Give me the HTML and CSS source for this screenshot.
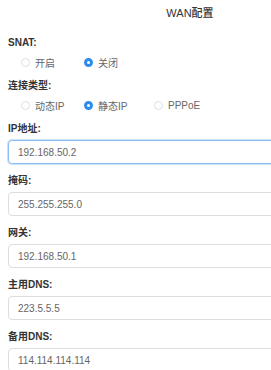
FILE: index.html
```html
<!DOCTYPE html>
<html lang="zh-CN">
<head>
  <meta charset="UTF-8">
  <meta name="viewport" content="width=device-width, initial-scale=1.0">
  <title>WAN配置</title>
  <link rel="stylesheet" href="styles.css">
</head>
<body>
  <div class="page">
    <h1 class="title">WAN配置</h1>

    <form class="wan-form">
      <div class="field field-radio">
        <label class="field-label">SNAT:</label>
        <div class="radio-group">
          <label class="radio-option"><input type="radio" name="snat" value="on"><span>开启</span></label>
          <label class="radio-option"><input type="radio" name="snat" value="off" checked><span>关闭</span></label>
        </div>
      </div>

      <div class="field field-radio">
        <label class="field-label">连接类型:</label>
        <div class="radio-group">
          <label class="radio-option"><input type="radio" name="mode" value="dhcp"><span>动态IP</span></label>
          <label class="radio-option"><input type="radio" name="mode" value="static" checked><span>静态IP</span></label>
          <label class="radio-option"><input type="radio" name="mode" value="pppoe"><span>PPPoE</span></label>
        </div>
      </div>

      <div class="field">
        <label class="field-label" for="ip">IP地址:</label>
        <input class="text-input is-focus" id="ip" type="text" value="192.168.50.2">
      </div>

      <div class="field">
        <label class="field-label" for="mask">掩码:</label>
        <input class="text-input" id="mask" type="text" value="255.255.255.0">
      </div>

      <div class="field">
        <label class="field-label" for="gateway">网关:</label>
        <input class="text-input" id="gateway" type="text" value="192.168.50.1">
      </div>

      <div class="field">
        <label class="field-label" for="dns1">主用DNS:</label>
        <input class="text-input" id="dns1" type="text" value="223.5.5.5">
      </div>

      <div class="field">
        <label class="field-label" for="dns2">备用DNS:</label>
        <input class="text-input" id="dns2" type="text" value="114.114.114.114">
      </div>
    </form>
  </div>
</body>
</html>
```

FILE: styles.css
```css
:root {
  --text: #333;
  --muted: #666;
  --border: #dcdee2;
  --primary: #2d8cf0;
  --focus: #8cc0f5;
}

* {
  margin: 0;
  padding: 0;
  box-sizing: border-box;
  font-family: 'Liberation Sans', 'Noto Sans CJK SC', sans-serif;
}

html, body {
  overflow: hidden;
  background-color: #fff;
}

.page {
  width: 380px;
  padding: 5px 8px 0;
  color: var(--text);
}

.title {
  font-size: 11px;
  line-height: 16px;
  font-weight: 500;
  text-align: center;
  color: #333;
  margin-bottom: 16px;
}

.field {
  display: flex;
  flex-direction: column;
  margin-bottom: 11px;
}

.field-label {
  font-size: 10px;
  line-height: 12px;
  font-weight: 600;
  color: var(--text);
  margin-bottom: 5px;
}

.field-radio .field-label {
  margin-bottom: 6px;
}

/* radios */
.radio-group {
  display: grid;
  grid-template-columns: 63px 70px auto;
  padding-left: 13px;
  height: 14px;
  align-items: center;
}

.radio-option {
  display: flex;
  align-items: center;
  gap: 5px;
  font-size: 10px;
  color: var(--muted);
}

.radio-option input {
  appearance: none;
  -webkit-appearance: none;
  width: 9px;
  height: 9px;
  border: 1px solid var(--border);
  border-radius: 50%;
  background-color: #fff;
  margin: 0;
}

.radio-option input:checked {
  border: 3px solid var(--primary);
}

/* text inputs */
.text-input {
  height: 24px;
  width: 100%;
  padding: 0 9px;
  border: 1px solid var(--border);
  border-radius: 4px;
  font-size: 10px;
  color: #666;
  background-color: #fff;
  outline: none;
}

.text-input.is-focus {
  border-color: var(--focus);
  box-shadow: 0 0 0 1px rgba(45, 140, 240, 0.25);
}
```
